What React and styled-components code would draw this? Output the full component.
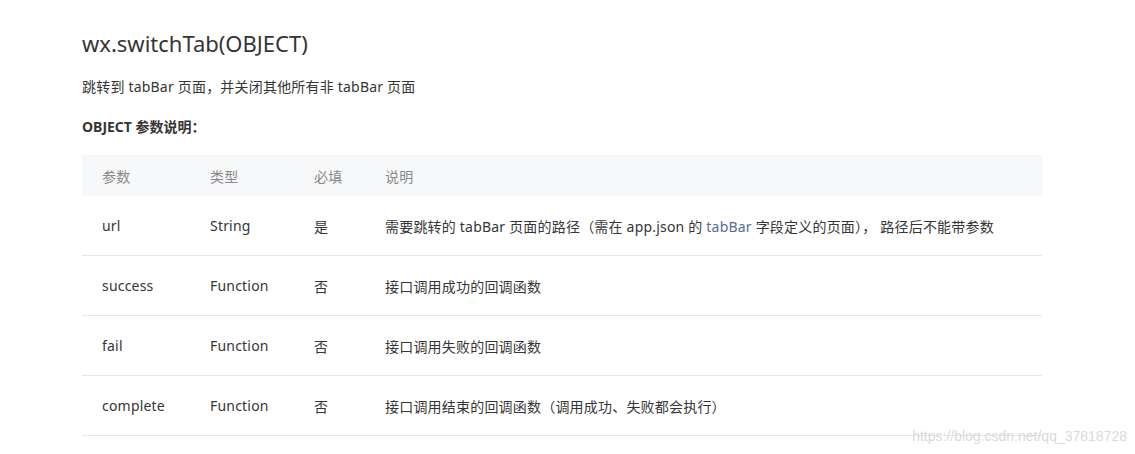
import React from "react";
import styled, { createGlobalStyle } from "styled-components";

const Global = createGlobalStyle`
  html, body {
    margin: 0;
    padding: 0;
    background: #fff;
  }
  body {
    font-family: "Noto Sans", "Noto Sans CJK SC", sans-serif;
    color: #353535;
  }
`;

const Page = styled.div`
  position: relative;
  width: 1135px;
  height: 454px;
  padding: 27px 0 0 82px;
  box-sizing: border-box;
  overflow: hidden;
`;

const Title = styled.h2`
  margin: 0;
  font-size: 22px;
  font-weight: 400;
  line-height: 32px;
  color: #353535;
`;

const Desc = styled.p`
  margin: 18px 0 0;
  font-size: 14px;
  line-height: 20px;
  letter-spacing: 0.2px;
`;

const Caption = styled.h5`
  margin: 20px 0 0;
  font-size: 14px;
  font-weight: 700;
  line-height: 20px;
`;

const Table = styled.table`
  margin-top: 18px;
  width: 960px;
  border-collapse: collapse;
  font-size: 14px;
  table-layout: fixed;
  letter-spacing: 0.2px;
`;

const Head = styled.th`
  width: ${(p) => p.w || "auto"};
  height: 41px;
  padding: 0;
  padding-left: ${(p) => (p.first ? "20px" : "0")};
  box-sizing: border-box;
  background: #f7f8fa;
  color: #888;
  font-weight: 400;
  text-align: left;
`;

const Row = styled.tr`
  border-bottom: 1px solid #e7e7e7;
`;

const Cell = styled.td`
  height: 59px;
  padding: 0;
  padding-left: ${(p) => (p.first ? "20px" : "0")};
  color: #353535;
`;

const Link = styled.a`
  color: #576b95;
  text-decoration: none;
`;

const Watermark = styled.div`
  position: absolute;
  right: 8px;
  bottom: 10px;
  font-family: "Liberation Sans", Arial, sans-serif;
  font-size: 14px;
  color: rgba(200, 200, 200, 0.7);
`;

const rows = [
  {
    name: "url",
    type: "String",
    req: "是",
    desc: (
      <>
        需要跳转的 tabBar 页面的路径（需在 app.json 的 <Link>tabBar</Link>{" "}
        字段定义的页面）， 路径后不能带参数
      </>
    ),
  },
  { name: "success", type: "Function", req: "否", desc: "接口调用成功的回调函数" },
  { name: "fail", type: "Function", req: "否", desc: "接口调用失败的回调函数" },
  {
    name: "complete",
    type: "Function",
    req: "否",
    desc: "接口调用结束的回调函数（调用成功、失败都会执行）",
  },
];

export default function App() {
  return (
    <Page>
      <Global />
      <Title>wx.switchTab(OBJECT)</Title>
      <Desc>跳转到 tabBar 页面，并关闭其他所有非 tabBar 页面</Desc>
      <Caption>OBJECT 参数说明：</Caption>
      <Table>
        <thead>
          <tr>
            <Head first w="128px">参数</Head>
            <Head w="104px">类型</Head>
            <Head w="71px">必填</Head>
            <Head>说明</Head>
          </tr>
        </thead>
        <tbody>
          {rows.map((r) => (
            <Row key={r.name}>
              <Cell first>{r.name}</Cell>
              <Cell>{r.type}</Cell>
              <Cell>{r.req}</Cell>
              <Cell>{r.desc}</Cell>
            </Row>
          ))}
        </tbody>
      </Table>
      <Watermark>https://blog.csdn.net/qq_37818728</Watermark>
    </Page>
  );
}
